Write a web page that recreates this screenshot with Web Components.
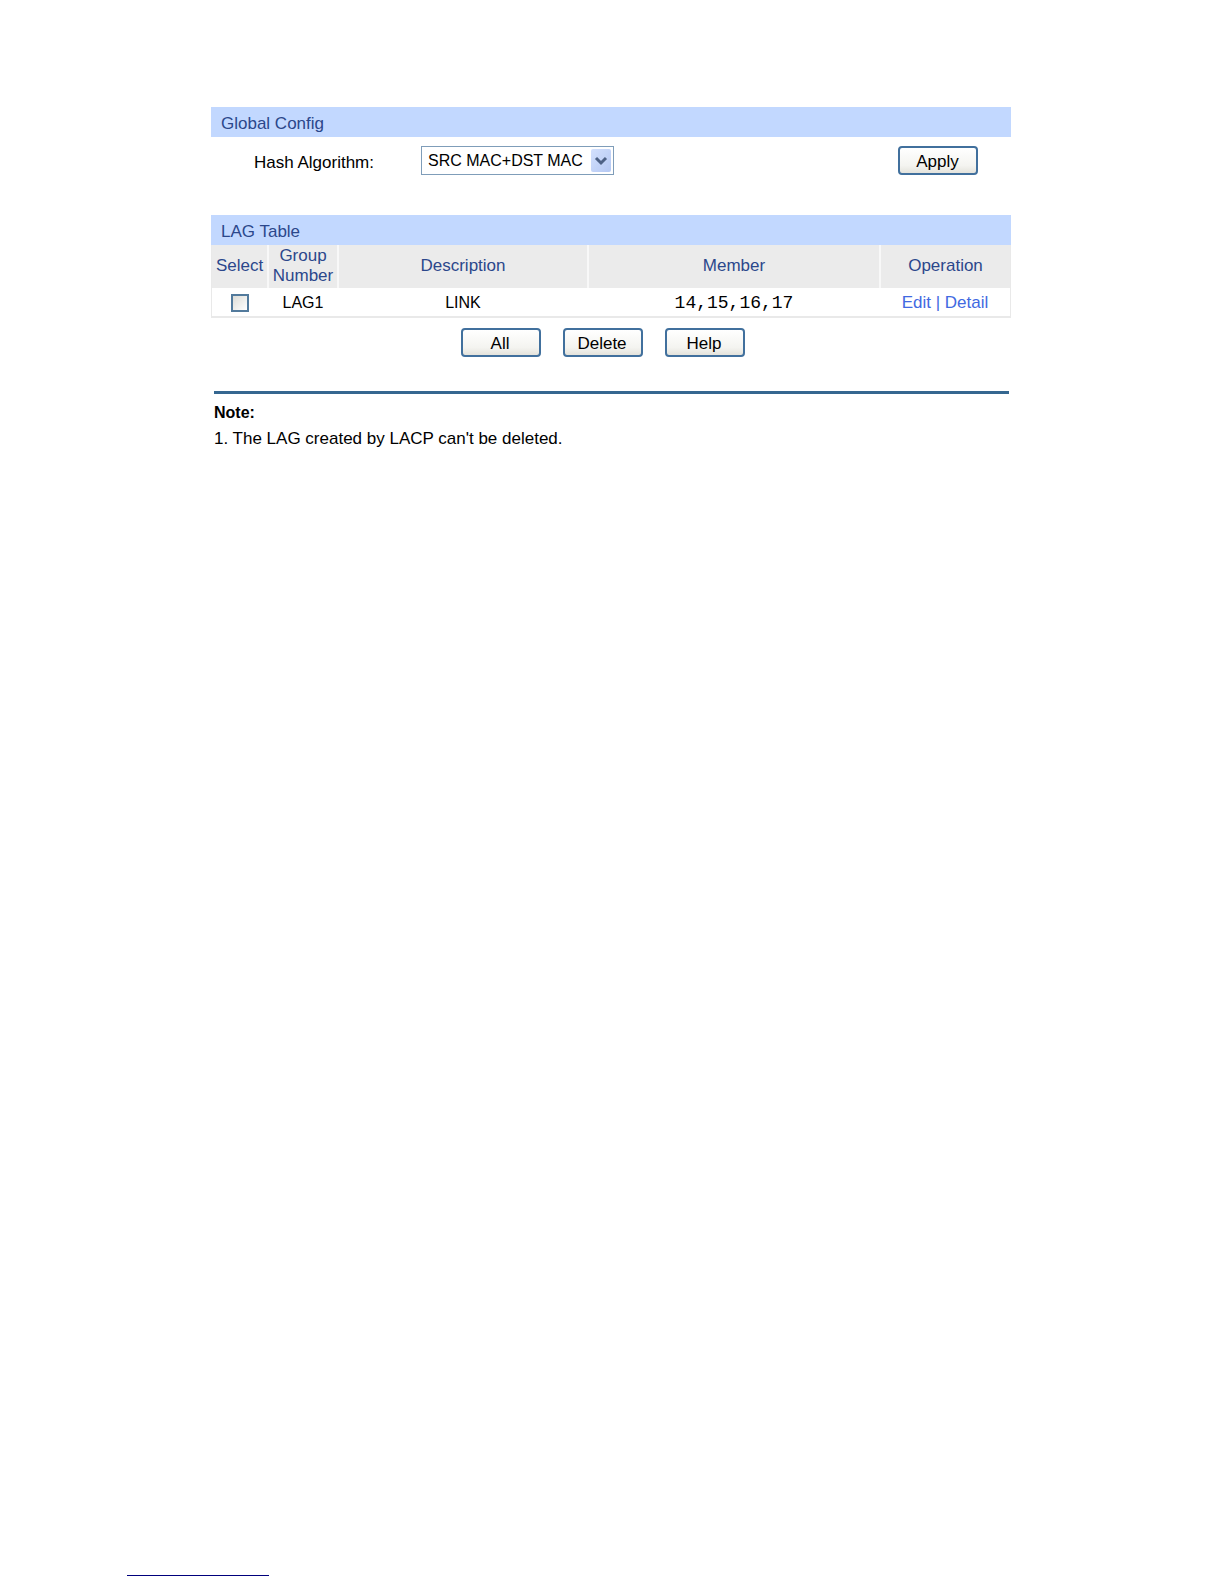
<!DOCTYPE html>
<html lang="en">
<head>
<meta charset="utf-8">
<title>LAG Table</title>
<style>
  body {
    margin: 0;
    background: white;
    color: black;
    font: 17px/20px "Liberation Sans", Arial, sans-serif;
  }
</style>
</head>
<body>
<lag-page>
  <config-section heading="Global Config">
    <hash-form></hash-form>
  </config-section>
  <config-section heading="LAG Table">
    <lag-table></lag-table>
  </config-section>
  <button-bar>
    <push-button>All</push-button>
    <push-button>Delete</push-button>
    <push-button>Help</push-button>
  </button-bar>
  <note-box heading="Note:">1. The LAG created by LACP can't be deleted.</note-box>
</lag-page>

<script>
class LagPage extends HTMLElement {
  connectedCallback() {
    this.attachShadow({ mode: "open" });
    this.shadowRoot.innerHTML = `
      <style>
        :host {
          --bar-background: #c2d8ff;
          --head-background: #ebebeb;
          --title-color: #2b478b;
          --link-color: #4169e1;
          --rule-color: #356790;
          display: flex;
          flex-direction: column;
          box-sizing: border-box;
          min-height: 100vh;
          padding: 107px 213px 8px 211px;
        }

        main {
          flex: 1;
        }

        hr {
          width: 142px;
          margin: 0 0 0 -84px;
          border: 0;
          border-top: 1px solid #00007c;
        }
      </style>
      <main><slot></slot></main>
      <hr>
    `;
  }
}

class ConfigSection extends HTMLElement {
  connectedCallback() {
    this.attachShadow({ mode: "open" });
    this.shadowRoot.innerHTML = `
      <style>
        :host {
          display: block;
        }

        h2 {
          margin: 0;
          padding: 7px 10px 3px;
          background: var(--bar-background);
          color: var(--title-color);
          font: inherit;
        }
      </style>
      <h2>${this.getAttribute("heading")}</h2>
      <slot></slot>
    `;
  }
}

class PushButton extends HTMLElement {
  connectedCallback() {
    this.attachShadow({ mode: "open" });
    this.shadowRoot.innerHTML = `
      <style>
        :host {
          display: block;
        }

        button {
          display: block;
          width: 80px;
          height: 29px;
          padding: 3px 1px 0 0;
          border: 2px solid #41709d;
          border-radius: 4px;
          background: linear-gradient(#fff, #f4f4f0 70%, #e4e3dc);
          color: black;
          font: inherit;
        }
      </style>
      <button type="button"><slot></slot></button>
    `;
  }
}

class HashForm extends HTMLElement {
  connectedCallback() {
    this.attachShadow({ mode: "open" });
    this.shadowRoot.innerHTML = `
      <style>
        :host {
          display: block;
        }

        form {
          display: flex;
          align-items: center;
          padding: 9px 33px 40px 43px;
        }

        label {
          width: 167px;
          padding-top: 4px;
        }

        .dropdown {
          display: grid;
          width: 193px;
          margin-right: auto;
        }

        select {
          grid-area: 1 / 1;
          appearance: none;
          box-sizing: border-box;
          width: 100%;
          height: 29px;
          padding: 0 30px 0 6px;
          border: 1px solid #7f9db9;
          border-radius: 0;
          background: white;
          color: black;
          font: inherit;
          font-size: 16px;
        }

        svg {
          grid-area: 1 / 1;
          place-self: center end;
          margin-right: 3px;
          pointer-events: none;
        }
      </style>
      <form>
        <label for="hash">Hash Algorithm:</label>
        <div class="dropdown">
          <select id="hash">
            <option>SRC MAC+DST MAC</option>
            <option>SRC IP+DST IP</option>
          </select>
          <svg width="20" height="23" viewBox="0 0 20 23" aria-hidden="true">
            <defs>
              <linearGradient id="face" x2="1" y2="1">
                <stop offset="0" stop-color="#d3e0fd"/>
                <stop offset="1" stop-color="#b4c8f3"/>
              </linearGradient>
            </defs>
            <rect width="20" height="23" rx="2" fill="url(#face)"/>
            <path d="M5 9l5 5 5-5" fill="none" stroke="#4d6185" stroke-width="3"/>
          </svg>
        </div>
        <push-button>Apply</push-button>
      </form>
    `;
  }
}

class LagTable extends HTMLElement {
  connectedCallback() {
    this.attachShadow({ mode: "open" });
    this.shadowRoot.innerHTML = `
      <style>
        :host {
          display: block;
          border: solid #e9e9e9;
          border-width: 0 1px 2px;
        }

        table {
          width: 100%;
          table-layout: fixed;
          border-collapse: collapse;
        }

        .select { width: 56px; }
        .group { width: 70px; }
        .description { width: 250px; }
        .operation { width: 130px; }

        th, td {
          padding: 0;
          text-align: center;
        }

        th {
          height: 41px;
          padding-bottom: 2px;
          background: var(--head-background);
          color: var(--title-color);
          font-weight: normal;
        }

        th + th {
          border-left: 2px solid #f8f8f8;
        }

        td {
          height: 26px;
          padding-top: 2px;
          font-size: 16px;
        }

        .ports {
          font: 18px/20px "Liberation Mono", "Courier New", monospace;
        }

        .links {
          font-size: 17px;
          color: var(--link-color);
        }

        a {
          color: inherit;
          text-decoration: none;
        }

        input {
          appearance: none;
          display: block;
          box-sizing: border-box;
          width: 18px;
          height: 18px;
          margin: 0 auto;
          border: 2px solid #527a9c;
          background: linear-gradient(135deg, #dcdcd7, #fff);
        }
      </style>
      <table>
        <colgroup>
          <col class="select">
          <col class="group">
          <col class="description">
          <col>
          <col class="operation">
        </colgroup>
        <thead>
          <tr>
            <th>Select</th>
            <th>Group<br>Number</th>
            <th>Description</th>
            <th>Member</th>
            <th>Operation</th>
          </tr>
        </thead>
        <tbody>
          <tr>
            <td><input type="checkbox" aria-label="Select LAG1"></td>
            <td>LAG1</td>
            <td>LINK</td>
            <td class="ports">14,15,16,17</td>
            <td class="links"><a href="#edit">Edit</a> | <a href="#detail">Detail</a></td>
          </tr>
        </tbody>
      </table>
    `;
  }
}

class ButtonBar extends HTMLElement {
  connectedCallback() {
    this.attachShadow({ mode: "open" });
    this.shadowRoot.innerHTML = `
      <style>
        :host {
          display: flex;
          justify-content: center;
          gap: 22px;
          padding: 10px 17px 34px 0;
        }
      </style>
      <slot></slot>
    `;
  }
}

class NoteBox extends HTMLElement {
  connectedCallback() {
    this.attachShadow({ mode: "open" });
    this.shadowRoot.innerHTML = `
      <style>
        :host {
          display: block;
          margin: 0 2px 0 3px;
          padding-top: 7px;
          border-top: 3px solid var(--rule-color);
        }

        h3 {
          margin: 0;
          font-size: 16px;
          line-height: 24px;
        }

        p {
          margin: 0;
          line-height: 28px;
        }
      </style>
      <h3>${this.getAttribute("heading")}</h3>
      <p><slot></slot></p>
    `;
  }
}

customElements.define("lag-page", LagPage);
customElements.define("config-section", ConfigSection);
customElements.define("push-button", PushButton);
customElements.define("hash-form", HashForm);
customElements.define("lag-table", LagTable);
customElements.define("button-bar", ButtonBar);
customElements.define("note-box", NoteBox);
</script>
</body>
</html>
